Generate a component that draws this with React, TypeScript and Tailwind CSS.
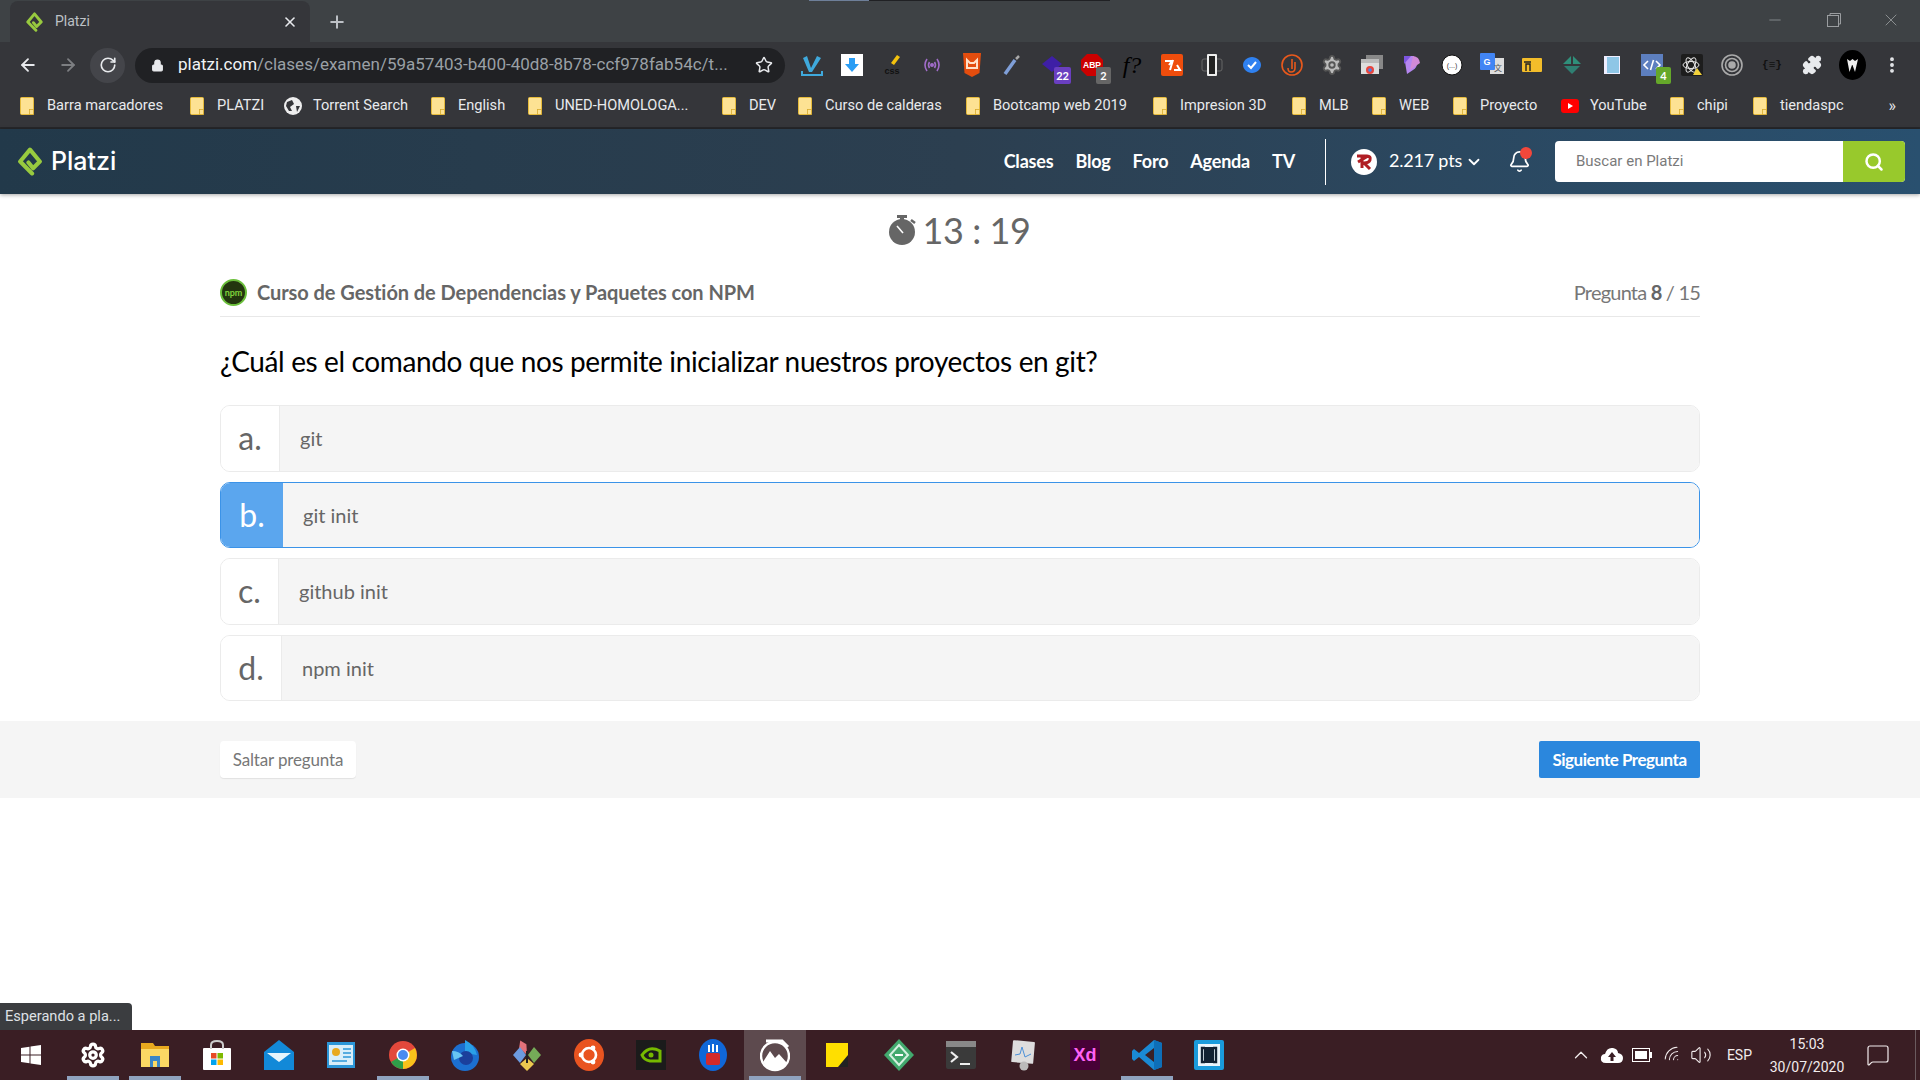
import React from "react";
import { ArrowLeft, ArrowRight, RotateCw, Lock, Star, X, Plus, Search, ChevronDown, Bell, Minus, EllipsisVertical, Puzzle, Settings, ChevronUp, Volume2, Wifi, MessageSquare } from "lucide-react";

const Folder = () => (
  <svg width="14" height="18" viewBox="0 0 14 18" className="shrink-0">
    <rect x="0.5" y="0.5" width="13" height="17" rx="1" fill="#fde293" stroke="#e6bb3c" />
    <rect x="9.5" y="12.5" width="4" height="5" fill="#fde293" stroke="#d8ab2c" strokeWidth="0.8" />
  </svg>
);

const Diamond = ({ w, h }: { w: number; h: number }) => (
  <svg width={w} height={h} viewBox="0 0 24 28" className="shrink-0">
    <path d="M14 25.5 L2.5 14 L12 2.5 L21.5 14 L15 20.5 L10.5 15" fill="none" stroke="#98ca3f" strokeWidth="4" strokeLinejoin="round" strokeLinecap="round" />
  </svg>
);

const marks: { label: string; w: string; kind?: "globe" | "yt" }[] = [
  { label: "PLATZI", w: "w-[94px]" },
  { label: "Torrent Search", w: "w-[147px]", kind: "globe" },
  { label: "English", w: "w-[97px]" },
  { label: "UNED-HOMOLOGA...", w: "w-[194px]" },
  { label: "DEV", w: "w-[76px]" },
  { label: "Curso de calderas", w: "w-[168px]" },
  { label: "Bootcamp web 2019", w: "w-[187px]" },
  { label: "Impresion 3D", w: "w-[139px]" },
  { label: "MLB", w: "w-[80px]" },
  { label: "WEB", w: "w-[81px]" },
  { label: "Proyecto", w: "w-[108px]" },
  { label: "YouTube", w: "w-[109px]", kind: "yt" },
  { label: "chipi", w: "w-[83px]" },
  { label: "tiendaspc", w: "w-[96px]" },
];

const Ext = ({ children, badge, badgeColor }: { children: React.ReactNode; badge?: string; badgeColor?: string }) => (
  <div className="relative flex h-6 w-6 shrink-0 items-center justify-center">
    {children}
    {badge && (
      <span className="absolute -bottom-[7px] -right-[7px] flex h-[17px] min-w-[15px] items-center justify-center rounded-[2px] px-[2px] text-[11px] font-bold leading-none text-white" style={{ background: badgeColor }}>
        {badge}
      </span>
    )}
  </div>
);

const extensions = [
  <Ext key="1"><svg width="22" height="24" viewBox="0 0 22 24"><path d="M2 5 L6 3 L10 15 L16 3 L20 5 L11 19 H8Z" fill="#3fa9dc" /><path d="M1 18 V22 H21 V18" fill="none" stroke="#3fa9dc" strokeWidth="2" /></svg></Ext>,
  <Ext key="2"><svg width="22" height="22" viewBox="0 0 22 22"><rect width="22" height="22" fill="#fff" /><path d="M8 4 H14 V10 H18 L11 18 L4 10 H8Z" fill="#2a9df4" /></svg></Ext>,
  <Ext key="3"><svg width="24" height="24" viewBox="0 0 24 24"><path d="M11 10 L17 2 L20 4 L14 12 Z" fill="#f4c20d" /><text x="12" y="21" fontSize="9" fontWeight="700" textAnchor="middle" fill="#111" fontFamily="Liberation Sans">css</text></svg></Ext>,
  <Ext key="4"><svg width="20" height="16" viewBox="0 0 20 16" fill="none" stroke="#a06cc8" strokeWidth="1.6"><path d="M5 2 Q1 8 5 14 M15 2 Q19 8 15 14 M7.5 5 Q5.5 8 7.5 11 M12.5 5 Q14.5 8 12.5 11" /><circle cx="10" cy="8" r="1.2" fill="#a06cc8" /></svg></Ext>,
  <Ext key="5"><svg width="18" height="24" viewBox="0 0 18 24"><path d="M0 0 H18 L16.5 20 L9 24 L1.5 20Z" fill="#e44d0e" /><path d="M4 7 L7 10 H11 L14 7 V15 H4Z" fill="none" stroke="#ffe0c8" strokeWidth="2" /></svg></Ext>,
  <Ext key="6"><svg width="18" height="22" viewBox="0 0 18 22"><path d="M2 20 L12 6" stroke="#7f9fd8" strokeWidth="3.5" /><path d="M13 5 L16 2" stroke="#aaa" strokeWidth="2.5" /></svg></Ext>,
  <Ext key="7" badge="22" badgeColor="#6a3fc0"><svg width="22" height="22" viewBox="0 0 22 22"><path d="M11 2 L21 10 L11 18 L1 10Z" fill="#3e1fa6" /></svg></Ext>,
  <Ext key="8" badge="2" badgeColor="#666"><svg width="24" height="24" viewBox="0 0 24 24"><path d="M7 1 H17 L23 7 V17 L17 23 H7 L1 17 V7Z" fill="#c00" /><text x="12" y="15" fontSize="8.5" fontWeight="700" textAnchor="middle" fill="#fff" fontFamily="Liberation Sans">ABP</text></svg></Ext>,
  <Ext key="9"><span className="font-['Liberation_Serif',serif] text-[24px] font-medium italic leading-none text-black">f?</span></Ext>,
  <Ext key="10"><svg width="22" height="22" viewBox="0 0 22 22"><rect width="22" height="22" rx="2" fill="#ef4d0c" /><path d="M4 7 H11 L8 11 M12 6 L9 16 M13 16 H19 L16 11" fill="none" stroke="#fff" strokeWidth="2" /></svg></Ext>,
  <Ext key="11"><svg width="22" height="24" viewBox="0 0 22 24"><rect x="1" y="6" width="20" height="12" rx="2" fill="none" stroke="#666" /><rect x="6" y="1" width="10" height="22" rx="1" fill="#eee" /><rect x="8" y="3" width="6" height="18" fill="#222" /></svg></Ext>,
  <Ext key="12"><svg width="20" height="20" viewBox="0 0 20 20"><path d="M10 2 C15 2 19 6 19 10 C19 14 15 18 10 18 C5 18 1 14 1 10 C1 6 5 2 10 2Z" fill="#2f81f0" /><path d="M6 10 L9 13 L14 7" fill="none" stroke="#fff" strokeWidth="2" /></svg></Ext>,
  <Ext key="13"><svg width="24" height="24" viewBox="0 0 24 24" fill="none" stroke="#e8591c" strokeWidth="1.6"><circle cx="12" cy="12" r="10" /><path d="M12 6 V16 M15 9 V15 Q15 19 11 19 Q8 19 8 15" /></svg></Ext>,
  <Ext key="14"><Settings size={22} fill="#bbb" color="#555" /></Ext>,
  <Ext key="15"><svg width="22" height="20" viewBox="0 0 22 20"><rect x="5" y="0" width="17" height="14" fill="#888" /><rect x="0" y="4" width="18" height="15" fill="#ddd" /><rect x="0" y="4" width="18" height="4" fill="#bbb" /><circle cx="9" cy="15" r="4" fill="#e8453c" /><circle cx="9" cy="15" r="1.8" fill="#4285f4" /></svg></Ext>,
  <Ext key="16"><svg width="20" height="20" viewBox="0 0 20 20"><path d="M2 1 H11 A8 8 0 0 1 11 15 L5 19 Z" fill="#b586f0" /><path d="M2 1 L9 1 L2 9Z" fill="#7d55e0" /><path d="M11 1 A8 8 0 0 1 18 8 L8 15Z" fill="#d28ad8" /></svg></Ext>,
  <Ext key="17"><svg width="22" height="22" viewBox="0 0 22 22"><circle cx="11" cy="11" r="10" fill="#fff" stroke="#111" /><text x="11" y="14" fontSize="7" textAnchor="middle" fill="#333" fontFamily="Liberation Sans">(...)</text></svg></Ext>,
  <Ext key="18"><svg width="24" height="24" viewBox="0 0 24 24"><rect x="10" y="5" width="14" height="16" fill="#ddd" /><rect y="0" width="15" height="17" rx="1" fill="#4285f4" /><text x="7" y="12" fontSize="9" fontWeight="700" textAnchor="middle" fill="#fff" fontFamily="Liberation Sans">G</text><text x="18" y="18" fontSize="8" textAnchor="middle" fill="#555" fontFamily="Noto Sans CJK SC">文</text></svg></Ext>,
  <Ext key="19"><svg width="20" height="16" viewBox="0 0 20 16"><rect width="20" height="14" y="1" rx="1" fill="#f3bd2a" /><path d="M2 5 H9 M4 14 V7 H8 V14" fill="none" stroke="#222" strokeWidth="1.4" /></svg></Ext>,
  <Ext key="20"><svg width="20" height="20" viewBox="0 0 20 20"><path d="M9 1 L1 9 L9 9Z M11 1 L19 9 L11 9Z" fill="#2f8f7a" /><path d="M2 11 H18 L10 19Z" fill="#2f7f72" /></svg></Ext>,
  <Ext key="21"><svg width="16" height="18" viewBox="0 0 16 18"><rect width="16" height="18" fill="#eef" /><rect x="3" y="1" width="12" height="16" fill="#8ec6e6" /></svg></Ext>,
  <Ext key="22" badge="4" badgeColor="#65a82a"><svg width="22" height="22" viewBox="0 0 22 22"><rect width="22" height="22" fill="#5d7fbf" /><path d="M7 7 L3 11 L7 15 M15 7 L19 11 L15 15 M12.5 6 L9.5 16" fill="none" stroke="#fff" strokeWidth="1.6" /></svg></Ext>,
  <Ext key="23"><svg width="22" height="22" viewBox="0 0 22 22"><rect width="22" height="22" rx="2" fill="#1d1d1d" /><g fill="none" stroke="#e8e8e8" strokeWidth="1"><ellipse cx="10" cy="11" rx="8" ry="3.5" /><ellipse cx="10" cy="11" rx="8" ry="3.5" transform="rotate(60 10 11)" /><ellipse cx="10" cy="11" rx="8" ry="3.5" transform="rotate(120 10 11)" /></g><path d="M16 14 L21 21 H12Z" fill="#f3d23a" /></svg></Ext>,
  <Ext key="24"><svg width="22" height="22" viewBox="0 0 22 22" fill="none" stroke="#aaa" strokeWidth="1.6"><circle cx="11" cy="11" r="10" /><circle cx="11" cy="11" r="6.5" /><circle cx="11" cy="11" r="3" fill="#aaa" /></svg></Ext>,
  <Ext key="25"><span className="font-['Liberation_Mono',monospace] text-[11px] font-bold leading-none text-[#111]">{"{≡}"}</span></Ext>,
  <Ext key="26"><Puzzle size={20} fill="#e8eaed" color="#e8eaed" /></Ext>,
  <Ext key="27"><svg width="27" height="30" viewBox="0 0 27 30" className="shrink-0"><ellipse cx="13.5" cy="15" rx="13.5" ry="15" fill="#000" /><path d="M8 9 L10.5 22 L13 15 L13.5 15 L16 22 L19 9 L16 11 L13.5 9 L11 11Z" fill="#eee" /></svg></Ext>,
  <Ext key="28"><EllipsisVertical size={20} color="#e8eaed" strokeWidth={2.6} /></Ext>,
];

const options = [
  { l: "a.", t: "git", w: "w-[59px]" },
  { l: "b.", t: "git init", w: "w-[62px]", sel: true },
  { l: "c.", t: "github init", w: "w-[58px]" },
  { l: "d.", t: "npm init", w: "w-[61px]" },
];

const TaskCell = ({ children, on, active }: { children: React.ReactNode; on?: boolean; active?: boolean }) => (
  <div className={`relative flex h-full w-[62px] shrink-0 items-center justify-center ${active ? "bg-[#5d4a4e]" : ""}`}>
    {children}
    {on && <div className="absolute bottom-0 left-[5px] right-[5px] h-[4px] bg-[#8fa3bf]" />}
  </div>
);

const taskIcons = [
  <TaskCell key="win"><svg width="20" height="20" viewBox="0 0 20 20" fill="#fff"><path d="M0 3 L8.5 1.8 V9.5 H0Z M9.5 1.6 L20 0 V9.5 H9.5Z M0 10.5 H8.5 V18.2 L0 17Z M9.5 10.5 H20 V20 L9.5 18.4Z" /></svg></TaskCell>,
  <TaskCell key="gear" on><Settings size={26} color="#fff" strokeWidth={3} /></TaskCell>,
  <TaskCell key="folder" on><svg width="28" height="28" viewBox="0 0 28 28"><path d="M0 2 H12 L14 5 H28 V26 H0Z" fill="#e8a91f" /><path d="M0 8 H28 V26 H0Z" fill="#fbd864" /><path d="M9 15 H19 V26 H16 V20 H12 V26 H9Z" fill="#3b86c6" /></svg></TaskCell>,
  <TaskCell key="store"><svg width="28" height="30" viewBox="0 0 28 30"><rect y="8" width="28" height="22" rx="1" fill="#fff" /><path d="M8 9 V5 Q8 1 14 1 Q20 1 20 5 V9" fill="none" stroke="#ccc" strokeWidth="2" /><rect x="8" y="13" width="5.5" height="5.5" fill="#e74a25" /><rect x="14.5" y="13" width="5.5" height="5.5" fill="#7eb900" /><rect x="8" y="19.5" width="5.5" height="5.5" fill="#00a3ee" /><rect x="14.5" y="19.5" width="5.5" height="5.5" fill="#fdb900" /></svg></TaskCell>,
  <TaskCell key="mail"><svg width="30" height="30" viewBox="0 0 30 30"><path d="M15 0 L30 12 V30 H0 V12Z" fill="#1289d8" /><path d="M3 13 H27 L15 22Z" fill="#e6f4fc" /></svg></TaskCell>,
  <TaskCell key="cp"><svg width="28" height="26" viewBox="0 0 28 26"><rect width="28" height="26" fill="#2b96d8" /><rect x="2" y="3" width="24" height="20" fill="#d8eefa" /><circle cx="9" cy="10" r="4" fill="#e8a91f" /><path d="M16 7 H24 M16 11 H24 M16 15 H24 M5 19 H20" stroke="#2b96d8" strokeWidth="1.6" /></svg></TaskCell>,
  <TaskCell key="chrome" on><svg width="28" height="30" viewBox="0 0 28 28"><circle cx="14" cy="14" r="14" fill="#e2483b" /><path d="M14 14 L14 28 A14 14 0 0 1 2 21Z" fill="#2f9e49" /><path d="M14 14 L26 7 A14 14 0 0 1 14 28Z" fill="#f9c21b" /><circle cx="14" cy="14" r="6.5" fill="#fff" /><circle cx="14" cy="14" r="5" fill="#4a8bf0" /></svg></TaskCell>,
  <TaskCell key="ff"><svg width="28" height="32" viewBox="0 0 28 32"><circle cx="14" cy="18" r="14" fill="#1c6fd0" /><path d="M14 1 Q24 6 26 16 L14 14Z" fill="#2aa0e8" /><circle cx="15" cy="19" r="7" fill="#1b3f9c" /><path d="M1 12 Q8 12 12 17 L3 21Z" fill="#67c5f3" /></svg></TaskCell>,
  <TaskCell key="st"><svg width="30" height="32" viewBox="0 0 30 32"><path d="M15 0 L19 6 L15 16 L11 6Z" transform="rotate(-25 15 16)" fill="#e2727a" /><path d="M8 8 L1 16 L8 24 L14 16Z" fill="#6d9be0" /><path d="M22 8 L29 16 L22 24 L16 16Z" fill="#75ab58" /><path d="M15 19 L22 25 L15 32 L8 25Z" fill="#ecc94f" /><path d="M15 12 V24" stroke="#222" strokeWidth="2" /></svg></TaskCell>,
  <TaskCell key="ub"><svg width="30" height="32" viewBox="0 0 30 32"><ellipse cx="15" cy="16" rx="15" ry="16" fill="#e95420" /><circle cx="15" cy="16" r="7" fill="none" stroke="#fff" strokeWidth="2.6" /><circle cx="7" cy="16" r="2.4" fill="#fff" /><circle cx="19" cy="9" r="2.4" fill="#fff" /><circle cx="19" cy="23" r="2.4" fill="#fff" /></svg></TaskCell>,
  <TaskCell key="nv"><svg width="30" height="30" viewBox="0 0 30 30"><rect width="30" height="30" fill="#1b1b1b" /><path d="M6 15 Q13 5 24 11 V21 H14 Q8 20 6 15Z" fill="none" stroke="#76b900" strokeWidth="3" /><circle cx="15" cy="15" r="2.5" fill="#76b900" /></svg></TaskCell>,
  <TaskCell key="yt"><svg width="28" height="32" viewBox="0 0 28 32"><ellipse cx="14" cy="16" rx="14" ry="16" fill="#1067d8" /><rect x="7" y="14" width="14" height="12" rx="2" fill="#d42a2a" /><path d="M10 6 V13 M14 5 V13 M18 6 V13" stroke="#fff" strokeWidth="2" /></svg></TaskCell>,
  <TaskCell key="mt" active on><svg width="30" height="34" viewBox="0 0 30 34"><circle cx="15" cy="18" r="14" fill="none" stroke="#fff" strokeWidth="2.4" /><path d="M3 24 L10 13 L15 20 L19 16 L27 25 Q20 33 15 32 Q8 32 3 24Z" fill="#fff" /><path d="M6 3 H22 L28 9" fill="none" stroke="#fff" strokeWidth="3" /></svg></TaskCell>,
  <TaskCell key="sn"><svg width="22" height="24" viewBox="0 0 22 24"><rect width="22" height="24" fill="#ffdf00" /><path d="M22 12 V24 H12Z" fill="#222" /></svg></TaskCell>,
  <TaskCell key="grn"><svg width="30" height="32" viewBox="0 0 30 32"><path d="M15 0 L30 16 L15 32 L0 16Z" fill="#42a96e" /><path d="M15 6 L24 16 L15 26 L6 16Z" fill="none" stroke="#d5f0e0" strokeWidth="2" /><path d="M11 16 H19" stroke="#fff" strokeWidth="2" /></svg></TaskCell>,
  <TaskCell key="term"><svg width="30" height="28" viewBox="0 0 30 28"><rect width="30" height="28" rx="2" fill="#3a3a3a" /><rect width="30" height="6" fill="#888" /><path d="M5 11 L11 16 L5 21 M14 23 H24" fill="none" stroke="#eee" strokeWidth="2.2" /></svg></TaskCell>,
  <TaskCell key="mon"><svg width="28" height="32" viewBox="0 0 28 32"><rect x="3" y="2" width="22" height="22" rx="1" fill="#ddd" transform="rotate(5 14 14)" /><path d="M6 16 L11 15 L13 8 L16 18 L22 15" fill="none" stroke="#4a90d9" /><circle cx="15" cy="27" r="4.5" fill="#bbb" /></svg></TaskCell>,
  <TaskCell key="xd"><div className="flex h-[30px] w-[30px] items-center justify-center rounded-[2px] bg-[#470137] font-['Liberation_Sans',sans-serif] text-[18px] font-bold leading-none text-[#ff61f6]">Xd</div></TaskCell>,
  <TaskCell key="vs" on><svg width="32" height="32" viewBox="0 0 32 32"><path d="M23 1 L31 4 V28 L23 31 L8 18 L3 22 L1 20 V12 L3 10 L8 14Z" fill="#1a8ad4" /><path d="M23 9 L14 16 L23 23Z" fill="#3a2025" /><path d="M23 1 L31 4 V28 L23 31Z" fill="#0e6fb8" /></svg></TaskCell>,
  <TaskCell key="br"><svg width="30" height="30" viewBox="0 0 30 30"><rect width="30" height="30" rx="2" fill="#1a9bdc" /><rect x="4" y="4" width="22" height="22" fill="#e8f4fb" /><rect x="10" y="7" width="10" height="16" fill="#123" /><path d="M11 8 H8 V22 H11 M19 8 H22 V22 H19" fill="none" stroke="#123" strokeWidth="2.4" /></svg></TaskCell>,
];

export default function App() {
  return (
    <div className="relative flex h-screen w-full flex-col overflow-hidden bg-white font-['Lato',sans-serif]">
      {/* Tab strip */}
      <div className="relative flex h-[42px] shrink-0 items-end bg-[#3e4245] pl-[10px]">
        <div className="absolute left-[809px] top-0 h-px w-[301px] bg-[#202124]" />
        <div className="absolute left-[809px] top-0 h-px w-[60px] bg-[#6e7f99]" />
        <div className="flex h-[41px] w-[300px] items-center rounded-t-[8px] bg-[#35363a] pl-[16px] pr-[12px]">
          <Diamond w={17} h={20} />
          <span className="ml-[12px] flex-1 font-['Roboto',sans-serif] text-[14px] text-[#bdc1c6]">Platzi</span>
          <X size={16} color="#e8eaed" strokeWidth={2.4} />
        </div>
        <div className="ml-[17px] flex h-[41px] items-center">
          <Plus size={20} color="#bdc1c6" strokeWidth={2.4} />
        </div>
        <div className="ml-auto flex h-[41px] items-center gap-[40px] pb-[4px] pr-[19px]">
          <Minus size={18} color="#9a9da0" strokeWidth={1} className="-translate-x-[3px]" />
          <svg width="14" height="14" viewBox="0 0 14 14" fill="none" stroke="#9a9da0"><rect x="0.5" y="2.5" width="11" height="11" /><path d="M3 2.5 V0.5 H13.5 V11 H11.5" /></svg>
          <X size={20} color="#9a9da0" strokeWidth={1} />
        </div>
      </div>

      {/* Toolbar */}
      <div className="flex h-[46px] shrink-0 items-center bg-[#35363a] pl-[18px]">
        <ArrowLeft size={20} color="#e8eaed" strokeWidth={2.2} />
        <ArrowRight size={20} color="#7d7f82" strokeWidth={2.2} className="ml-[20px]" />
        <div className="ml-[12px] flex h-[35px] w-[35px] items-center justify-center rounded-full bg-[#44454a]">
          <RotateCw size={18} color="#e8eaed" strokeWidth={2.2} />
        </div>
        <div className="ml-[10px] flex h-[35px] w-[650px] items-center rounded-full bg-[#202124] pl-[16px] pr-[12px] font-['Roboto',sans-serif] text-[17px]">
          <Lock size={13} color="#e8eaed" fill="#e8eaed" />
          <span className="ml-[14px] text-[#f1f3f4]">platzi.com</span>
          <span className="flex-1 truncate text-[#9aa0a6]">/clases/examen/59a57403-b400-40d8-8b78-ccf978fab54c/t...</span>
          <Star size={18} color="#e8eaed" strokeWidth={2} className="ml-[8px] shrink-0" />
        </div>
        <div className="ml-[15px] flex items-center gap-[16px]">{extensions}</div>
      </div>

      {/* Bookmarks */}
      <div className="flex h-[41px] shrink-0 items-center border-b-2 border-[#26272a] bg-[#35363a] pb-[3px] pl-[20px] font-['Roboto',sans-serif] text-[14.6px] text-[#e8eaed]">
        <div className="mr-[27px] flex items-center gap-[13px] whitespace-nowrap">
          <Folder />
          <span>Barra marcadores</span>
        </div>
        {marks.map((m) => (
          <div key={m.label} className={`flex ${m.w} shrink-0 items-center whitespace-nowrap ${m.kind ? "gap-[11px]" : "gap-[13px]"}`}>
            {m.kind === "globe" ? (
              <svg width="18" height="18" viewBox="0 0 18 18"><circle cx="9" cy="9" r="9" fill="#eee" /><path d="M3 5 L8 3 L10 7 L6 10 L8 14 L5 14 L2 9Z M12 9 L16 9 L13 15Z" fill="#35363a" /></svg>
            ) : m.kind === "yt" ? (
              <svg width="18" height="14" viewBox="0 0 18 14"><rect width="18" height="14" rx="3" fill="#f00" /><path d="M7 4 L12 7 L7 10Z" fill="#fff" /></svg>
            ) : (
              <Folder />
            )}
            <span>{m.label}</span>
          </div>
        ))}
        <span className="ml-auto pr-[24px] text-[16px] leading-none">»</span>
      </div>

      {/* Platzi nav */}
      <header className="z-10 flex h-[65px] shrink-0 items-center bg-gradient-to-r from-[#22394a] via-[#2c3f50] to-[#29506f] pl-[17px] pr-[15px] shadow-[0_1px_4px_rgba(0,0,0,0.35)]">
        <Diamond w={26} h={29} />
        <span className="ml-[8px] font-['Inter',sans-serif] text-[25px] font-medium leading-none text-white">Platzi</span>
        <nav className="ml-auto flex items-center gap-[22px] text-[18px] font-bold tracking-[-0.2px] text-white">
          <span>Clases</span>
          <span>Blog</span>
          <span>Foro</span>
          <span>Agenda</span>
          <span>TV</span>
        </nav>
        <div className="ml-[30px] h-[46px] w-px bg-white" />
        <div className="ml-[25px] flex h-[26px] w-[26px] items-center justify-center rounded-full bg-white">
          <svg width="18" height="18" viewBox="0 0 18 18" fill="none" stroke="#b01e24" strokeWidth="3"><path d="M2 3 H12 Q16 3 15 7 Q14 10 9 10 L15 16 M7 3 V15 M3 9 L13 3" /></svg>
        </div>
        <span className="ml-[12px] pb-[2px] text-[18px] tracking-[-0.2px] text-white">2.217 pts</span>
        <ChevronDown size={18} color="#fff" strokeWidth={2.4} className="ml-[3px]" />
        <div className="relative ml-[25px]">
          <Bell size={23} color="#fff" strokeWidth={1.8} />
          <div className="absolute -right-[1px] -top-[3px] h-[12px] w-[12px] rounded-full bg-[#f2473b]" />
        </div>
        <div className="ml-[24px] flex h-[41px] w-[350px] overflow-hidden rounded-[4px] bg-white">
          <div className="flex flex-1 items-center pl-[21px] font-['Roboto',sans-serif] text-[15px] text-[#7a7a7a]">Buscar en Platzi</div>
          <div className="flex w-[62px] items-center justify-center bg-[#98c92c]">
            <Search size={20} color="#fff" strokeWidth={3} />
          </div>
        </div>
      </header>

      {/* Content */}
      <main className="flex flex-col items-center">
        <div className="mt-[15px] flex h-[42px] items-center gap-[5px] text-[#666]">
          <svg width="28" height="30" viewBox="0 0 28 30" fill="#666"><circle cx="13" cy="17" r="13" /><rect x="8" y="0" width="10" height="3" /><rect x="11" y="2" width="4" height="3" /><path d="M22 5 L26 8" stroke="#666" strokeWidth="2.5" /><path d="M8 11 L14 18" stroke="#fff" strokeWidth="1.6" /></svg>
          <span className="text-[36px] leading-none tracking-[-0.4px]">13 : 19</span>
        </div>

        <div className="mt-[23px] flex h-[43px] w-[1480px] items-center border-b border-[#e8e8e8] pb-[6px]">
          <div className="flex h-[27px] w-[27px] items-center justify-center rounded-full border-2 border-[#6bbf3b] bg-[#23360f] text-[9px] font-bold leading-none text-[#7fd13b]">npm</div>
          <span className="ml-[10px] text-[20px] font-bold tracking-[-0.06px] text-[#666]">Curso de Gestión de Dependencias y Paquetes con NPM</span>
          <span className="ml-auto text-[20px] tracking-[-0.8px] text-[#777]">Pregunta <b className="font-bold text-[#666]">8</b> / 15</span>
        </div>

        <h1 className="mt-[23px] h-[42px] w-[1480px] text-[28px] font-normal leading-[42px] tracking-[-0.37px] text-black">¿Cuál es el comando que nos permite inicializar nuestros proyectos en git?</h1>

        <div className="mt-[23px] flex w-[1480px] flex-col gap-[10px]">
          {options.map((o) => (
            <div key={o.l} className={`flex h-[66.5px] overflow-hidden rounded-[10px] border ${o.sel ? "border-[#3b93e8]" : "border-[#ebebeb]"}`}>
              <div className={`flex ${o.w} shrink-0 items-center justify-center text-[32px] leading-none ${o.sel ? "bg-[#5ba6ee] text-white" : "border-r border-[#ebebeb] bg-white text-[#666]"}`}>{o.l}</div>
              <div className="flex flex-1 items-center bg-[#f5f5f5] pl-5 text-[20px] text-[#666]">{o.t}</div>
            </div>
          ))}
        </div>
      </main>

      {/* Footer actions */}
      <div className="mt-[20px] flex h-[77px] shrink-0 justify-center bg-[#f5f5f5]">
        <div className="flex w-[1480px] items-center justify-between">
          <button className="flex h-[37px] w-[136px] items-center justify-center rounded-[4px] bg-white text-[17px] tracking-[-0.15px] text-[#777] shadow-[0_1px_1px_rgba(0,0,0,0.08)]">Saltar pregunta</button>
          <button className="flex h-[37px] w-[161px] items-center justify-center rounded-[2px] bg-[#2b87dd] text-[17px] font-bold tracking-[-0.5px] text-white">Siguiente Pregunta</button>
        </div>
      </div>

      <div className="flex-1" />

      {/* Status bubble */}
      <div className="absolute bottom-[50px] left-0 flex h-[27px] w-[132px] items-center rounded-tr-[4px] bg-[#3b3d40] pl-[5px] font-['Roboto',sans-serif] text-[14.6px] text-[#dfe1e5]">Esperando a pla...</div>

      {/* Windows taskbar */}
      <footer className="flex h-[50px] shrink-0 items-center bg-[#3a1e24] text-[#f2eced]">
        <div className="flex h-full">{taskIcons}</div>
        <div className="ml-auto flex h-full items-center font-['Roboto',sans-serif] text-[14px]">
          <ChevronUp size={22} strokeWidth={1.4} />
          <svg width="24" height="18" viewBox="0 0 24 18" fill="#fff" className="ml-[8px]"><path d="M6 17 Q0 17 1 11 Q2 8 5 8 Q7 1 13 2 Q18 3 18 7 Q23 8 23 12 Q23 17 18 17Z" /><path d="M12 6 L8 11 H10.5 V15 H13.5 V11 H16Z" fill="#3a1e24" /></svg>
          <svg width="20" height="14" viewBox="0 0 20 14" className="ml-[8px]"><rect x="0.5" y="0.5" width="17" height="13" fill="none" stroke="#fff" /><rect x="3" y="3" width="12" height="8" fill="#fff" /><rect x="18" y="4" width="2" height="6" fill="#fff" /></svg>
          <Wifi size={20} strokeWidth={1.2} className="ml-[11px] -rotate-45" />
          <Volume2 size={22} strokeWidth={1.2} className="ml-[7px]" />
          <span className="ml-[15px]">ESP</span>
          <div className="ml-[15px] flex w-[80px] flex-col items-center gap-[9px] leading-none">
            <span>15:03</span>
            <span>30/07/2020</span>
          </div>
          <MessageSquare size={24} strokeWidth={1.2} className="ml-[19px]" />
          <div className="ml-[25px] h-full w-[5px] border-l border-[#6a5a5e]" />
        </div>
      </footer>
    </div>
  );
}
